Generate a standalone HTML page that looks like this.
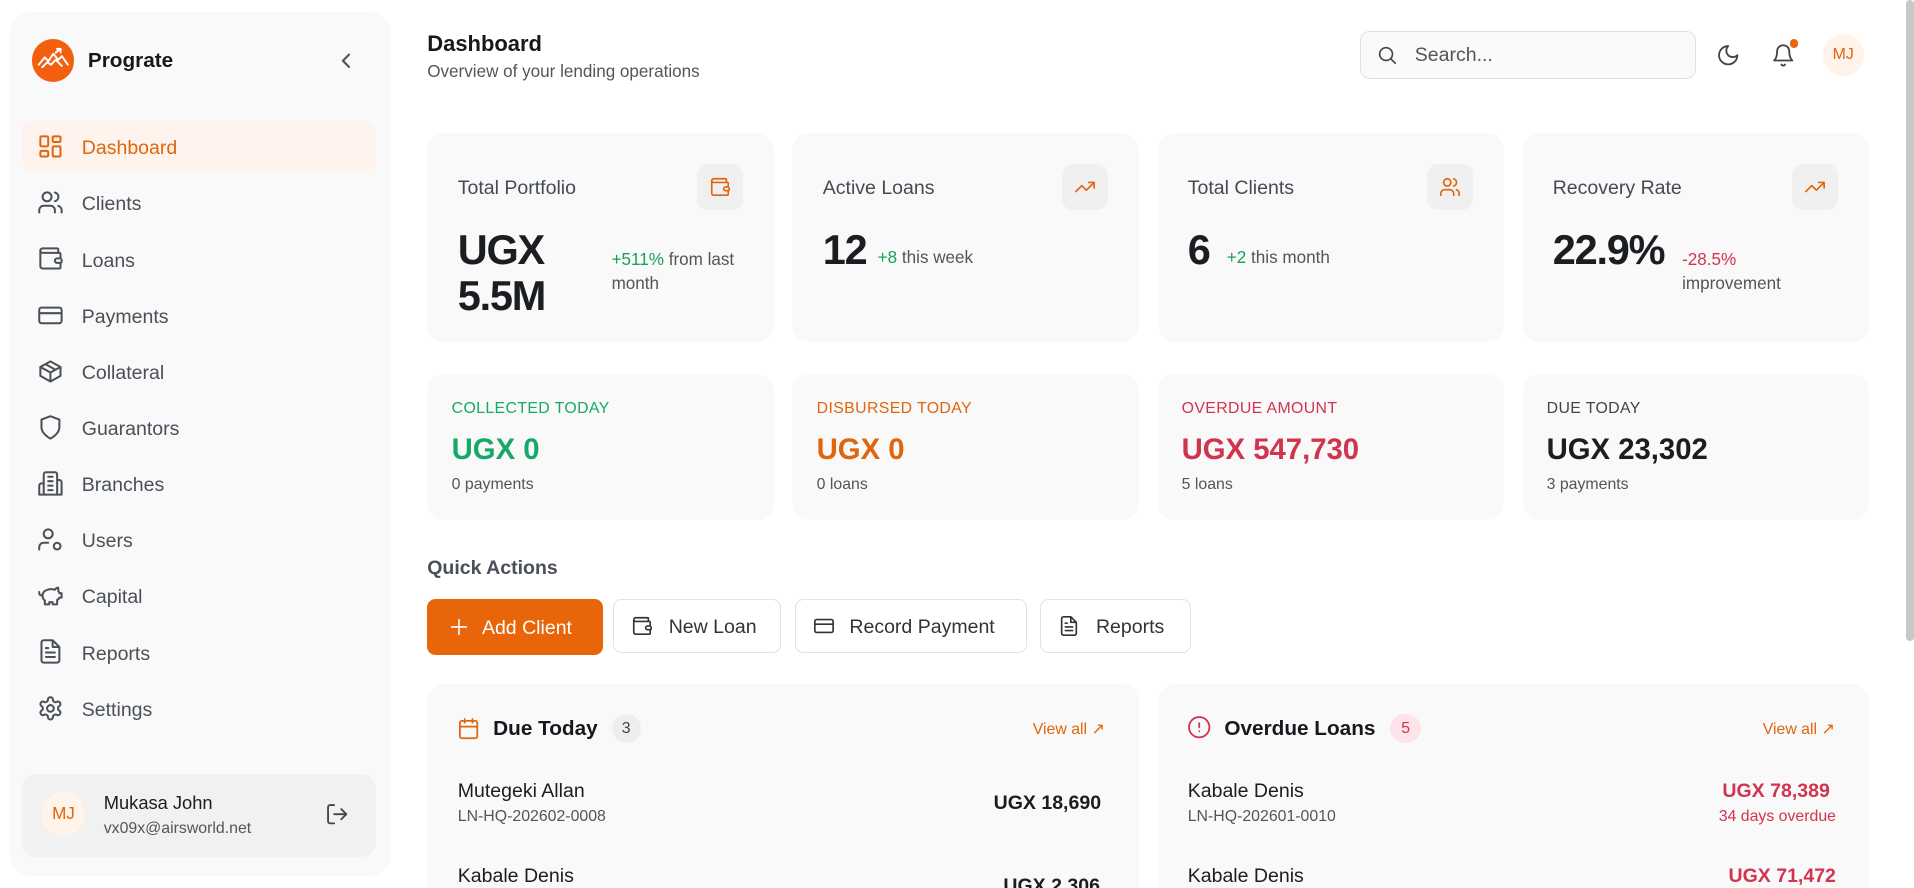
<!DOCTYPE html>
<html><head><meta charset="utf-8">
<style>
html,body{margin:0;padding:0;background:#fff;overflow:hidden;width:1914px;height:888px}
#r{position:relative;width:1568px;height:728px;zoom:1.2207;font-family:"Liberation Sans",sans-serif;color:#1f2328}
.a{position:absolute;white-space:nowrap}
.card{position:absolute;background:#f9f9f9;border-radius:14px}
.nav{position:absolute;left:30px;font-size:16px;color:#4a5059;height:24px;line-height:24px}
.nav svg{position:absolute;left:0;top:0}
.nav span{position:absolute;left:37px;top:1px}
svg{fill:none;stroke:currentColor;stroke-width:1.8;stroke-linecap:round;stroke-linejoin:round}
.ib{position:absolute;width:38px;height:38px;border-radius:9px;background:#f0f0f0;color:#e0650f}
.ib svg{position:absolute;left:10px;top:10px}
.t{font-size:16px;color:#444b55}
.big{font-size:34px;font-weight:bold;color:#1a1d21;letter-spacing:-1px;line-height:38px}
.lab{font-size:13px;letter-spacing:.3px}
.val{font-size:24px;font-weight:bold}
.sub{font-size:13px;color:#555}
.btn{position:absolute;top:491px;height:42px;border:1px solid #e2e2e2;border-radius:7px;background:#fff;font-size:16px;color:#333;line-height:45px}
.btn svg{position:absolute;top:12px}
</style></head><body><div id="r">
<div class="card" style="left:8px;top:10px;width:312px;height:708px;border-radius:18px"></div>
<div class="a" style="left:26px;top:32px;width:35px;height:35px;border-radius:50%;background:#f2600f"></div>
<svg class="a" style="left:29px;top:36px;color:#fff;stroke-width:1.6" width="30" height="26" viewBox="0 0 30 26"><path d="M3 17l5-6 3 3 4-6 4 5 3-3 5 7M6 19l4-4 3 2 4-4 5 5M17 7l4-3 M21 4l-3 0M21 4v3"/></svg>
<div class="a" style="left:72px;top:40px;font-size:17px;font-weight:bold;color:#15181c">Prograte</div>
<svg class="a" style="left:277px;top:42px;color:#555" width="14" height="16" viewBox="0 0 14 16"><path d="M9 3L4 8l5 5"/></svg>
<div class="a" style="left:18px;top:98px;width:290px;height:44px;border-radius:10px;background:#fff4ed"></div>
<div class="nav" style="top:109px;color:#e0650f"><svg width="22" height="22" viewBox="0 0 24 24"><rect x="3" y="3" width="7" height="9" rx="1"/><rect x="14" y="3" width="7" height="5" rx="1"/><rect x="14" y="12" width="7" height="9" rx="1"/><rect x="3" y="16" width="7" height="5" rx="1"/></svg><span>Dashboard</span></div>
<div class="nav" style="top:155px"><svg width="22" height="22" viewBox="0 0 24 24"><circle cx="9" cy="7" r="4"/><path d="M2 21v-2a4 4 0 014-4h6a4 4 0 014 4v2M16 3.1a4 4 0 010 7.8M22 21v-2a4 4 0 00-3-3.9"/></svg><span>Clients</span></div>
<div class="nav" style="top:201px"><svg width="22" height="22" viewBox="0 0 24 24"><path d="M19 7V4a1 1 0 00-1-1H5a2 2 0 000 4h15a1 1 0 011 1v4h-3a2 2 0 000 4h3a1 1 0 001-1v-2"/><path d="M3 5v14a2 2 0 002 2h15a1 1 0 001-1v-4"/></svg><span>Loans</span></div>
<div class="nav" style="top:247px"><svg width="22" height="22" viewBox="0 0 24 24"><rect x="2" y="5" width="20" height="14" rx="2"/><path d="M2 10h20"/></svg><span>Payments</span></div>
<div class="nav" style="top:293px"><svg width="22" height="22" viewBox="0 0 24 24"><path d="M21 8l-9-5-9 5v8l9 5 9-5z M3 8l9 5 9-5 M12 13v8 M7.5 5.5l9 5"/></svg><span>Collateral</span></div>
<div class="nav" style="top:339px"><svg width="22" height="22" viewBox="0 0 24 24"><path d="M12 22s8-4 8-10V5l-8-3-8 3v7c0 6 8 10 8 10z"/></svg><span>Guarantors</span></div>
<div class="nav" style="top:385px"><svg width="22" height="22" viewBox="0 0 24 24"><path d="M6 22V4a2 2 0 012-2h8a2 2 0 012 2v18zM6 12H4a2 2 0 00-2 2v8h4M18 9h2a2 2 0 012 2v11h-4M10 6h4M10 10h4M10 14h4M10 18h4"/></svg><span>Branches</span></div>
<div class="nav" style="top:431px"><svg width="22" height="22" viewBox="0 0 24 24"><circle cx="10" cy="7" r="4"/><path d="M2 21v-2a4 4 0 014-4h4"/><circle cx="18" cy="18" r="3"/></svg><span>Users</span></div>
<div class="nav" style="top:477px"><svg width="22" height="22" viewBox="0 0 24 24"><path d="M19 5c-1.5 0-2.8 1.4-3 2-3.5-1.5-11-.3-11 5 0 1.8 0 3 2 4.5V20h4v-2h3v2h4v-4c1-.5 1.7-1 2-2h2v-4h-2c0-1-.5-1.5-1-2V5z M2 9v1a2 2 0 002 2"/></svg><span>Capital</span></div>
<div class="nav" style="top:523px"><svg width="22" height="22" viewBox="0 0 24 24"><path d="M14 2H6a2 2 0 00-2 2v16a2 2 0 002 2h12a2 2 0 002-2V8z M14 2v6h6 M8 13h8 M8 17h8 M8 9h2"/></svg><span>Reports</span></div>
<div class="nav" style="top:569px"><svg width="22" height="22" viewBox="0 0 24 24"><circle cx="12" cy="12" r="3"/><path d="M12.2 2h-.4a2 2 0 00-2 2v.2a2 2 0 01-1 1.7l-.4.3a2 2 0 01-2 0l-.2-.1a2 2 0 00-2.7.7l-.2.4a2 2 0 00.7 2.7l.2.1a2 2 0 011 1.7v.5a2 2 0 01-1 1.7l-.2.1a2 2 0 00-.7 2.7l.2.4a2 2 0 002.7.7l.2-.1a2 2 0 012 0l.4.3a2 2 0 011 1.7v.2a2 2 0 002 2h.4a2 2 0 002-2v-.2a2 2 0 011-1.7l.4-.3a2 2 0 012 0l.2.1a2 2 0 002.7-.7l.2-.4a2 2 0 00-.7-2.7l-.2-.1a2 2 0 01-1-1.7v-.5a2 2 0 011-1.7l.2-.1a2 2 0 00.7-2.7l-.2-.4a2 2 0 00-2.7-.7l-.2.1a2 2 0 01-2 0l-.4-.3a2 2 0 01-1-1.7V4a2 2 0 00-2-2z"/></svg><span>Settings</span></div>
<div class="a" style="left:18px;top:634px;width:290px;height:68px;border-radius:12px;background:#f1f1f1"></div>
<div class="a" style="left:34px;top:649px;width:36px;height:36px;border-radius:50%;background:#fff3ea;color:#e0650f;font-size:14px;text-align:center;line-height:36px">MJ</div>
<div class="a" style="left:85px;top:649px;font-size:15px;color:#1a1d21">Mukasa John</div>
<div class="a" style="left:85px;top:672px;font-size:13px;color:#555">vx09x@airsworld.net</div>
<svg class="a" style="left:266px;top:657px;color:#444" width="20" height="20" viewBox="0 0 24 24"><path d="M9 21H5a2 2 0 01-2-2V5a2 2 0 012-2h4M16 17l5-5-5-5M21 12H9"/></svg>
<div class="a" style="left:350px;top:25px;font-size:18px;font-weight:bold;color:#15181c">Dashboard</div>
<div class="a" style="left:350px;top:51px;font-size:14px;color:#555">Overview of your lending operations</div>
<div class="a" style="left:1114px;top:25px;width:274px;height:38px;border:1px solid #e0e0e0;border-radius:8px;background:#fafafa"></div>
<svg class="a" style="left:1127px;top:36px;color:#444" width="18" height="18" viewBox="0 0 24 24"><circle cx="11" cy="11" r="7"/><path d="M21 21l-4.3-4.3"/></svg>
<div class="a" style="left:1159px;top:36px;font-size:16px;color:#555">Search...</div>
<svg class="a" style="left:1406px;top:35px;color:#444" width="20" height="20" viewBox="0 0 24 24"><path d="M12 3a6 6 0 009 9 9 9 0 11-9-9z"/></svg>
<svg class="a" style="left:1451px;top:34px;color:#444" width="20" height="22" viewBox="0 0 24 24"><path d="M6 8a6 6 0 0112 0c0 7 3 9 3 9H3s3-2 3-9M10.3 21a1.9 1.9 0 003.4 0"/></svg>
<div class="a" style="left:1466px;top:32px;width:7px;height:7px;border-radius:50%;background:#e8650a"></div>
<div class="a" style="left:1493px;top:28px;width:34px;height:34px;border-radius:50%;background:#fff3ea;color:#e0650f;font-size:13px;text-align:center;line-height:34px">MJ</div>
<div class="card" style="left:350px;top:109px;width:284px;height:171px"></div>
<div class="card" style="left:649px;top:109px;width:284px;height:171px"></div>
<div class="card" style="left:949px;top:109px;width:283px;height:171px"></div>
<div class="card" style="left:1248px;top:109px;width:283px;height:171px"></div>
<div class="a t" style="left:375px;top:145px">Total Portfolio</div>
<div class="a t" style="left:674px;top:145px">Active Loans</div>
<div class="a t" style="left:973px;top:145px">Total Clients</div>
<div class="a t" style="left:1272px;top:145px">Recovery Rate</div>
<div class="ib" style="left:571px;top:134px"><svg width="18" height="18" viewBox="0 0 24 24"><path d="M19 7V4a1 1 0 00-1-1H5a2 2 0 000 4h15a1 1 0 011 1v4h-3a2 2 0 000 4h3a1 1 0 001-1v-2"/><path d="M3 5v14a2 2 0 002 2h15a1 1 0 001-1v-4"/></svg></div>
<div class="ib" style="left:870px;top:134px"><svg width="18" height="18" viewBox="0 0 24 24"><path d="M22 7l-8.5 8.5-5-5L2 17M16 7h6v6"/></svg></div>
<div class="ib" style="left:1169px;top:134px"><svg width="18" height="18" viewBox="0 0 24 24"><circle cx="9" cy="7" r="4"/><path d="M2 21v-2a4 4 0 014-4h6a4 4 0 014 4v2M16 3.1a4 4 0 010 7.8M22 21v-2a4 4 0 00-3-3.9"/></svg></div>
<div class="ib" style="left:1468px;top:134px"><svg width="18" height="18" viewBox="0 0 24 24"><path d="M22 7l-8.5 8.5-5-5L2 17M16 7h6v6"/></svg></div>
<div class="a big" style="left:375px;top:186px">UGX<br>5.5M</div>
<div class="a" style="left:501px;top:203px;font-size:14px;color:#555;line-height:20px"><span style="color:#17a05a">+511%</span> from last<br>month</div>
<div class="a big" style="left:674px;top:186px">12</div>
<div class="a" style="left:719px;top:203px;font-size:14px;color:#555"><span style="color:#17a05a">+8</span> this week</div>
<div class="a big" style="left:973px;top:186px">6</div>
<div class="a" style="left:1005px;top:203px;font-size:14px;color:#555"><span style="color:#17a05a">+2</span> this month</div>
<div class="a big" style="left:1272px;top:186px">22.9%</div>
<div class="a" style="left:1378px;top:203px;font-size:14px;color:#555;line-height:20px"><span style="color:#d1344f">-28.5%</span><br>improvement</div>
<div class="card" style="left:350px;top:306px;width:284px;height:120px"></div>
<div class="card" style="left:649px;top:306px;width:284px;height:120px"></div>
<div class="card" style="left:949px;top:306px;width:283px;height:120px"></div>
<div class="card" style="left:1248px;top:306px;width:283px;height:120px"></div>
<div class="a lab" style="left:370px;top:328px;color:#17a866">COLLECTED TODAY</div>
<div class="a lab" style="left:669px;top:328px;color:#e0650f">DISBURSED TODAY</div>
<div class="a lab" style="left:968px;top:328px;color:#d1344f">OVERDUE AMOUNT</div>
<div class="a lab" style="left:1267px;top:328px;color:#444">DUE TODAY</div>
<div class="a val" style="left:370px;top:355px;color:#17a866">UGX 0</div>
<div class="a val" style="left:669px;top:355px;color:#e0650f">UGX 0</div>
<div class="a val" style="left:968px;top:355px;color:#d1344f">UGX 547,730</div>
<div class="a val" style="left:1267px;top:355px;color:#1a1d21">UGX 23,302</div>
<div class="a sub" style="left:370px;top:390px">0 payments</div>
<div class="a sub" style="left:669px;top:390px">0 loans</div>
<div class="a sub" style="left:968px;top:390px">5 loans</div>
<div class="a sub" style="left:1267px;top:390px">3 payments</div>
<div class="a" style="left:350px;top:456px;font-size:16px;font-weight:bold;color:#4a5059">Quick Actions</div>
<div class="btn" style="left:350px;width:142px;background:#e8650a;border-color:#e8650a;color:#fff;height:44px;top:491px;line-height:46px"><svg style="left:16px;top:13px" width="18" height="18" viewBox="0 0 24 24"><path d="M12 4v16M4 12h16"/></svg><span style="position:absolute;left:44px">Add Client</span></div>
<div class="btn" style="left:502px;width:136px"><svg style="left:14px" width="18" height="18" viewBox="0 0 24 24"><path d="M19 7V4a1 1 0 00-1-1H5a2 2 0 000 4h15a1 1 0 011 1v4h-3a2 2 0 000 4h3a1 1 0 001-1v-2"/><path d="M3 5v14a2 2 0 002 2h15a1 1 0 001-1v-4"/></svg><span style="position:absolute;left:45px">New Loan</span></div>
<div class="btn" style="left:651px;width:189px"><svg style="left:14px" width="18" height="18" viewBox="0 0 24 24"><rect x="2" y="5" width="20" height="14" rx="2"/><path d="M2 10h20"/></svg><span style="position:absolute;left:44px">Record Payment</span></div>
<div class="btn" style="left:852px;width:122px"><svg style="left:14px" width="18" height="18" viewBox="0 0 24 24"><path d="M14 2H6a2 2 0 00-2 2v16a2 2 0 002 2h12a2 2 0 002-2V8z M14 2v6h6 M8 13h8 M8 17h8 M8 9h2"/></svg><span style="position:absolute;left:45px">Reports</span></div>
<div class="card" style="left:350px;top:560px;width:583px;height:200px"></div>
<div class="card" style="left:949px;top:560px;width:582px;height:200px"></div>
<svg class="a" style="left:374px;top:587px;color:#e0650f" width="19" height="19" viewBox="0 0 24 24"><rect x="3" y="4" width="18" height="18" rx="2"/><path d="M16 2v4M8 2v4M3 10h18"/></svg>
<div class="a" style="left:404px;top:587px;font-size:17px;font-weight:bold;color:#15181c">Due Today</div>
<div class="a" style="left:501px;top:585px;width:24px;height:24px;border-radius:50%;background:#eee;font-size:13px;text-align:center;line-height:24px;color:#444">3</div>
<div class="a" style="left:846px;top:589px;font-size:13px;color:#e0650f">View all ↗</div>
<svg class="a" style="left:972px;top:586px;color:#d1344f" width="20" height="20" viewBox="0 0 24 24"><circle cx="12" cy="12" r="10"/><path d="M12 8v4M12 16h.01"/></svg>
<div class="a" style="left:1003px;top:587px;font-size:17px;font-weight:bold;color:#15181c">Overdue Loans</div>
<div class="a" style="left:1139px;top:585px;width:25px;height:24px;border-radius:50%;background:#fde3ea;font-size:13px;text-align:center;line-height:24px;color:#d1344f">5</div>
<div class="a" style="left:1444px;top:589px;font-size:13px;color:#e0650f">View all ↗</div>
<div class="a" style="left:375px;top:639px;font-size:16px;color:#1a1d21">Mutegeki Allan</div>
<div class="a" style="left:375px;top:662px;font-size:13px;color:#555">LN-HQ-202602-0008</div>
<div class="a" style="left:814px;top:649px;font-size:16px;font-weight:bold;color:#1a1d21">UGX 18,690</div>
<div class="a" style="left:375px;top:709px;font-size:16px;color:#1a1d21">Kabale Denis</div>
<div class="a" style="left:822px;top:717px;font-size:16px;font-weight:bold;color:#1a1d21">UGX 2,306</div>
<div class="a" style="left:973px;top:639px;font-size:16px;color:#1a1d21">Kabale Denis</div>
<div class="a" style="left:973px;top:662px;font-size:13px;color:#555">LN-HQ-202601-0010</div>
<div class="a" style="left:1411px;top:639px;font-size:16px;font-weight:bold;color:#d1344f">UGX 78,389</div>
<div class="a" style="left:1408px;top:662px;font-size:13px;color:#d1344f">34 days overdue</div>
<div class="a" style="left:973px;top:709px;font-size:16px;color:#1a1d21">Kabale Denis</div>
<div class="a" style="left:1416px;top:709px;font-size:16px;font-weight:bold;color:#d1344f">UGX 71,472</div>
<div class="a" style="left:1561px;top:0;width:7px;height:525px;border-radius:4px;background:#c8c8c8"></div>
</div></body></html>
